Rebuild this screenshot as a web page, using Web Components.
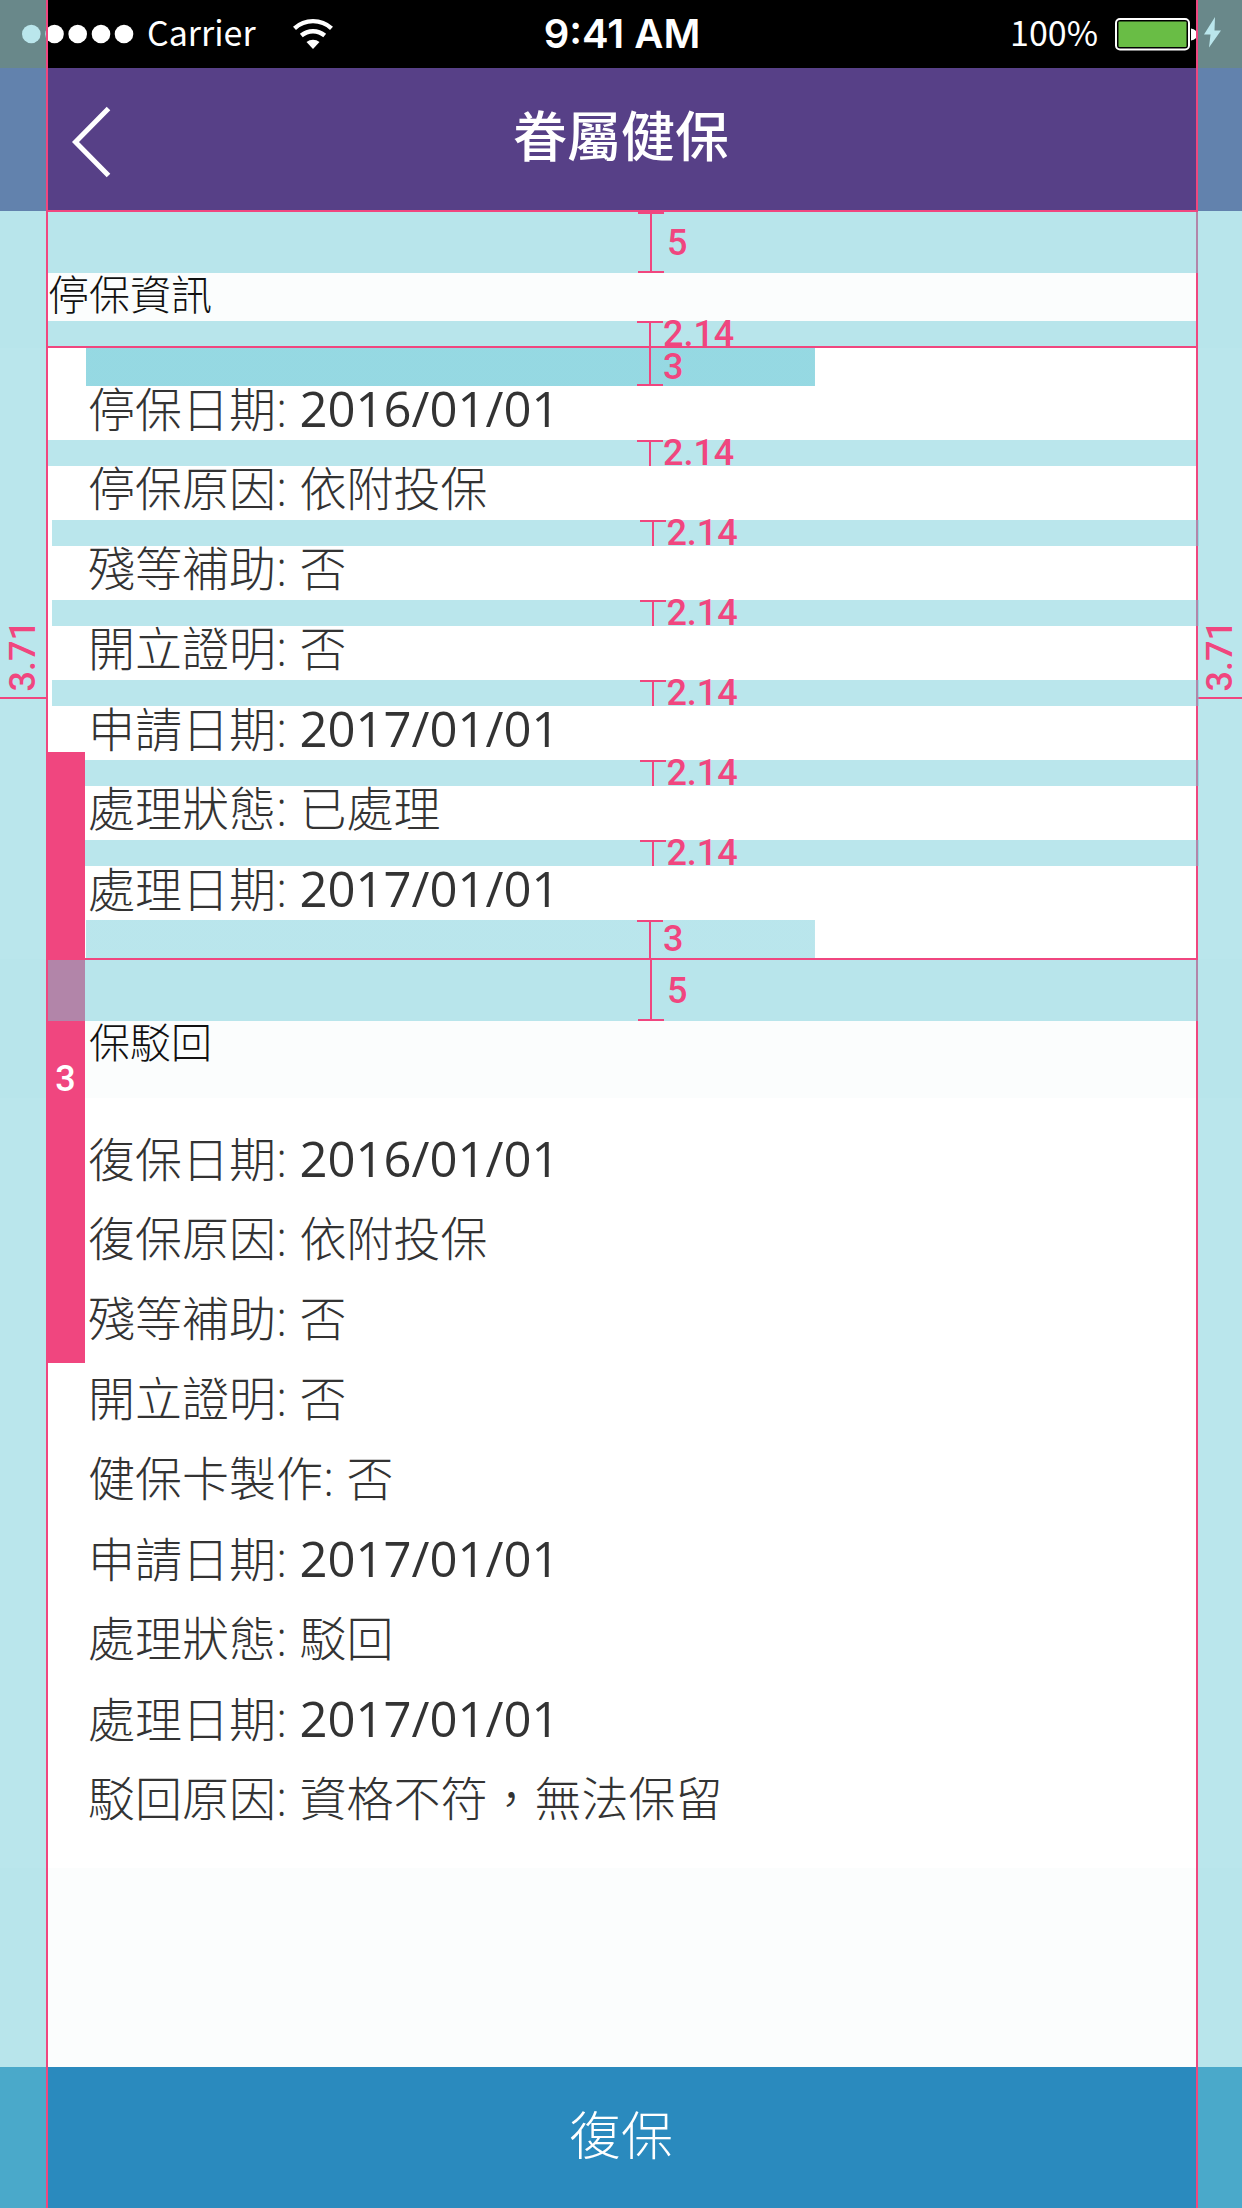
<!DOCTYPE html>
<html lang="zh-Hant">
<head>
<meta charset="utf-8">
<meta name="viewport" content="width=device-width, initial-scale=1">
<title>眷屬健保</title>
<style>
:root {
  --tint: rgba(110, 202, 216, .48);
  --pink: #f0467f;
  --edge: 46px;
  --cjk: "Noto Sans CJK TC", sans-serif;
  --text: "Open Sans", "Noto Sans CJK TC", sans-serif;
}
body { margin: 0; background: #fbfdfd; }
</style>
</head>
<body>
<app-screen>
  <status-bar></status-bar>
  <nav-bar>眷屬健保</nav-bar>
  <guide-line></guide-line>
  <info-heading>
    <spacing-band slot="before" size="5" caps="both" wide></spacing-band>
    停保資訊
    <spacing-band slot="after" size="2.14" caps="top"></spacing-band>
  </info-heading>
  <guide-line></guide-line>
  <info-panel>
    <spacing-band size="3" caps="bottom" partial double></spacing-band>
    <info-row label="停保日期" date>2016/01/01</info-row>
    <spacing-band size="2.14" caps="top"></spacing-band>
    <info-row label="停保原因">依附投保</info-row>
    <spacing-band size="2.14" caps="top" shifted></spacing-band>
    <info-row label="殘等補助">否</info-row>
    <spacing-band size="2.14" caps="top" shifted></spacing-band>
    <info-row label="開立證明">否</info-row>
    <spacing-band size="2.14" caps="top" shifted></spacing-band>
    <info-row label="申請日期" date>2017/01/01</info-row>
    <spacing-band size="2.14" caps="top" shifted></spacing-band>
    <info-row label="處理狀態">已處理</info-row>
    <spacing-band size="2.14" caps="top" shifted></spacing-band>
    <info-row label="處理日期" date>2017/01/01</info-row>
    <spacing-band size="3" caps="top" partial></spacing-band>
  </info-panel>
  <guide-line></guide-line>
  <info-heading indented>
    <spacing-band slot="before" size="5" caps="bottom" wide></spacing-band>
    保駁回
  </info-heading>
  <info-panel spaced>
    <info-row label="復保日期" date>2016/01/01</info-row>
    <info-row label="復保原因">依附投保</info-row>
    <info-row label="殘等補助">否</info-row>
    <info-row label="開立證明">否</info-row>
    <info-row label="健保卡製作">否</info-row>
    <info-row label="申請日期" date>2017/01/01</info-row>
    <info-row label="處理狀態">駁回</info-row>
    <info-row label="處理日期" date>2017/01/01</info-row>
    <info-row label="駁回原因">資格不符，無法保留</info-row>
  </info-panel>
  <action-bar>復保</action-bar>
  <side-rail side="left">3.71</side-rail>
  <side-rail side="right">3.71</side-rail>
  <indent-marker>3</indent-marker>
</app-screen>

<script>
function define(name, css, html) {
  const template = document.createElement('template');
  template.innerHTML = '<style>*{box-sizing:border-box}' + css + '</style>' + html;
  customElements.define(name, class extends HTMLElement {
    constructor() {
      super();
      this.attachShadow({ mode: 'open' }).append(template.content.cloneNode(true));
    }
    connectedCallback() {
      for (const el of this.shadowRoot.querySelectorAll('[data-from]')) {
        el.textContent = this.getAttribute(el.dataset.from) + (el.dataset.suffix || '');
      }
    }
  });
}

define('app-screen', `
  :host { display: flex; flex-direction: column; min-height: 100vh; position: relative; overflow: hidden; }
`, '<slot></slot>');

define('status-bar', `
  :host { display: flex; align-items: center; height: 68px; box-sizing: border-box; padding: 0 20px 0 22px;
    color: #fff; font: 34px/64px var(--cjk);
    background: linear-gradient(90deg, #644b43 46px, #000 46px calc(100% - 46px), #644b43 calc(100% - 46px)); }
  .side { flex: 1; display: flex; align-items: center; }
  .side span { padding-bottom: 4px; }
  .end { justify-content: flex-end; }
  .time { font: 600 40px/68px Inter, sans-serif; }
  svg { display: block; flex: none; }
  .dots { margin-right: 13px; }
  .wifi { margin-left: 37px; }
  .battery { margin-left: 17px; }
`, `
  <div class="side">
    <svg class="dots" width="112" height="20" fill="#fff"><circle cx="9.3" cy="10" r="9.3"/><circle cx="32.5" cy="10" r="9.3"/><circle cx="55.7" cy="10" r="9.3"/><circle cx="79" cy="10" r="9.3"/><circle cx="102" cy="10" r="9.3"/></svg>
    <span>Carrier</span>
    <svg class="wifi" width="40" height="32" viewBox="0 0 40 32" fill="none" stroke="#fff" stroke-width="4.4">
      <path d="M1.5 10.3a27.5 27.5 0 0 1 37 0M8.300 17.500a18 18 0 0 1 23.400 0"/>
      <path d="M13.500 24a11 11 0 0 1 13 0L20 31z" fill="#fff" stroke="none"/>
    </svg>
  </div>
  <span class="time">9:41 AM</span>
  <div class="side end">
    <span>100%</span>
    <svg class="battery" width="107" height="36" viewBox="0 0 107 36">
      <rect x="1" y="3" width="73" height="30.500" rx="4" fill="none" stroke="#fff" stroke-width="2"/>
      <rect x="3.500" y="5.500" width="68" height="25.500" rx="1" fill="#69bd45"/>
      <path d="M76 12.500q6 1 6 6t-6 6z" fill="#fff"/>
      <path d="M100 1 89 18.500h6.500L94 31.500 106 14.500h-6.500z" fill="#fff"/>
    </svg>
  </div>
`);

define('nav-bar', `
  :host { display: grid; grid-template-columns: 1fr auto 1fr; align-items: center; height: 143px; box-sizing: border-box;
    padding: 0 46px; background: #574087; color: #fff; }
  button { justify-self: start; display: flex; align-items: center; padding: 4px 24px 0; height: 143px; border: 0; background: none; }
  h1 { margin: 0; padding-bottom: 12px; font: 500 54px/60px var(--cjk); }
`, `
  <button type="button" aria-label="返回"><svg width="42" height="72" viewBox="0 0 42 72" fill="none" stroke="#fff" stroke-width="5"><path d="M38.500 2.500 5.500 36l33 33.500"/></svg></button>
  <h1><slot></slot></h1>
`);

define('guide-line', `
  :host { display: block; height: 2px; margin: -1px var(--edge) 0; background: var(--pink); position: relative; z-index: 2; flex: none; }
`, '');

define('spacing-band', `
  :host { display: flex; align-items: center; height: 26px; flex: none; position: relative; z-index: 2;
    background: var(--tint); color: var(--pink); font: 500 36px/36px Roboto, sans-serif; }
  :host([size="5"]) { height: 61px; z-index: 4; }
  :host([size="3"]) { height: 38px; }
  :host([wide]) { margin-right: -2px; }
  :host([shifted]) { margin: 0 -3px 0 4px; }
  :host([partial]) { background: linear-gradient(var(--tint), var(--tint)) 38px 0 / 63.5% 100% no-repeat; }
  :host([partial][double]) { background-image: linear-gradient(var(--tint), var(--tint)), linear-gradient(var(--tint), var(--tint)); }
  i { width: 26px; height: 100%; margin-left: 51.3%; flex: none;
    background: linear-gradient(var(--pink), var(--pink)) 50% 0 / 2px 100% no-repeat; }
  :host([caps="top"]) i, :host([caps="both"]) i { border-top: 2px solid var(--pink); }
  :host([caps="bottom"]) i, :host([caps="both"]) i { border-bottom: 2px solid var(--pink); }
  :host([size="5"]) span { margin-left: 3px; }
`, '<i></i><span data-from="size"></span>');

define('info-heading', `
  :host { display: block; padding: 0 var(--edge) 0 48px; flex: none; color: #111; }
  h2 { margin: 0; height: 48px; font: 300 41px/42px var(--text); }
  :host([indented]) h2 { height: 77px; padding-left: 41px; }
`, '<slot name="before"></slot><h2><slot></slot></h2><slot name="after"></slot>');

define('info-panel', `
  :host { display: flex; flex-direction: column; padding: 0 var(--edge) 1px 48px; background: #fff; }
  :host([spaced]) { gap: 26px; padding-top: 38px; padding-bottom: 38px; margin-bottom: auto; }
`, '<slot></slot>');

define('info-row', `
  :host { display: block; height: 54px; padding-left: 40px; color: #333; font: 300 47px/44px var(--text); }
  :host([date]) .value { font-size: 49px; font-weight: 400; }
`, '<span data-from="label" data-suffix=":"></span> <span class="value"><slot></slot></span>');

define('action-bar', `
  :host { display: block; }
  button { display: block; width: 100%; height: 141px; border: 0; padding: 0 0 6px; background: #2a8abe; color: #fff;
    font: 300 52px/60px var(--text); }
`, '<button type="button"><slot></slot></button>');

define('side-rail', `
  :host { display: flex; flex-direction: column; align-items: center; position: absolute; top: 0; bottom: 0;
    width: var(--edge); box-sizing: border-box; padding-top: 620px; background: var(--tint); z-index: 1; color: var(--pink);
    font: 500 36px/36px Roboto, sans-serif; }
  :host([side="left"]) { left: 0; box-shadow: 2px 0 var(--pink); }
  :host([side="right"]) { right: 0; width: 44px; box-shadow: -2px 0 var(--pink); }
  span { writing-mode: vertical-rl; transform: rotate(180deg); }
  hr { width: 100%; height: 2px; margin: 6px 0 0; border: 0; background: var(--pink); }
`, '<span><slot></slot></span><hr>');

define('indent-marker', `
  :host { display: flex; align-items: center; justify-content: center; position: absolute; left: var(--edge); top: 752px;
    width: 39px; height: 611px; box-sizing: border-box; padding-top: 42px; background: var(--pink); color: #fff; z-index: 3;
    font: 500 36px/36px Roboto, sans-serif; }
`, '<slot></slot>');
</script>
</body>
</html>
